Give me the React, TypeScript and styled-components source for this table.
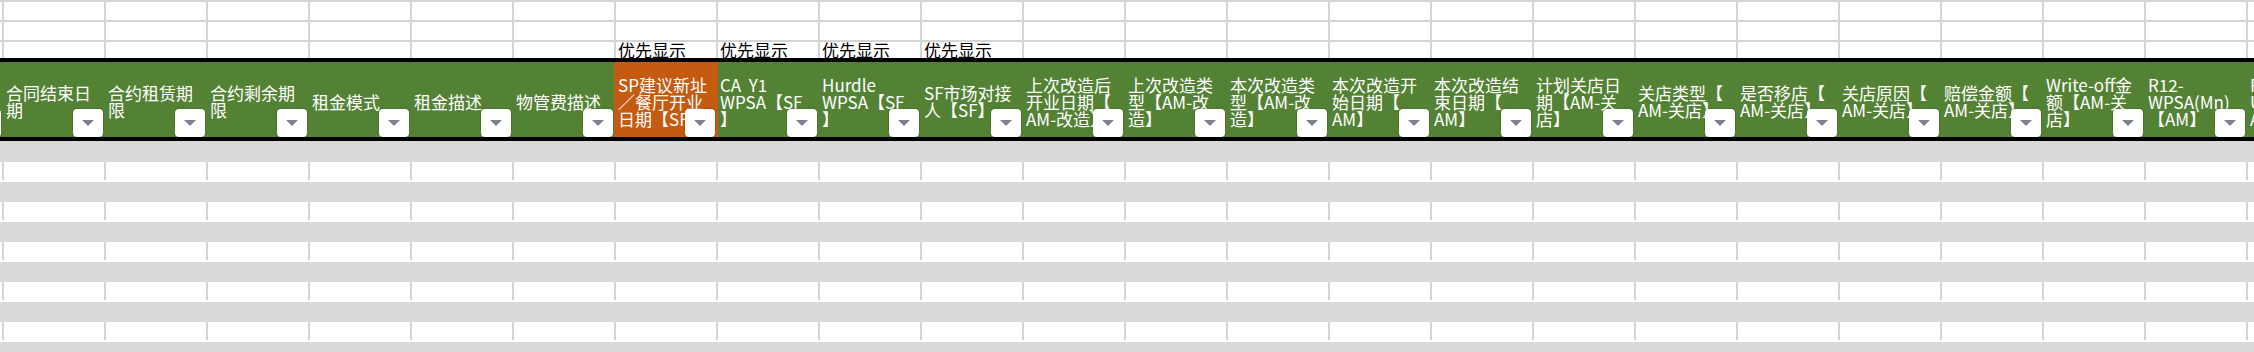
import styled, { createGlobalStyle } from 'styled-components'

const GRID = '#d4d4d4'
const BAND = '#d9d9d9'
const GREEN = '#548235'
const ORANGE = '#c55a11'

const GlobalStyle = createGlobalStyle`
  html,
  body {
    margin: 0;
    padding: 0;
    background: #fff;
    overflow: hidden;
  }
  body {
    font-family: "Noto Sans CJK SC", "Liberation Sans", sans-serif;
  }
`

interface Column {
  lines: string[]
  orange?: boolean
  priority?: boolean
}

// first entry is the column that sits just off the left edge
const columns: Column[] = [
  { lines: ['合同开始日', '期'] },
  { lines: ['合同结束日', '期'] },
  { lines: ['合约租赁期', '限'] },
  { lines: ['合约剩余期', '限'] },
  { lines: ['租金模式'] },
  { lines: ['租金描述'] },
  { lines: ['物管费描述'] },
  { lines: ['SP建议新址', '／餐厅开业', '日期【SF】'], orange: true, priority: true },
  { lines: ['CA  Y1', 'WPSA【SF', '】'], priority: true },
  { lines: ['Hurdle', 'WPSA【SF', '】'], priority: true },
  { lines: ['SF市场对接', '人【SF】'], priority: true },
  { lines: ['上次改造后', '开业日期【', 'AM-改造】'] },
  { lines: ['上次改造类', '型【AM-改', '造】'] },
  { lines: ['本次改造类', '型【AM-改', '造】'] },
  { lines: ['本次改造开', '始日期【', 'AM】'] },
  { lines: ['本次改造结', '束日期【', 'AM】'] },
  { lines: ['计划关店日', '期【AM-关', '店】'] },
  { lines: ['关店类型【', 'AM-关店】'] },
  { lines: ['是否移店【', 'AM-关店】'] },
  { lines: ['关店原因【', 'AM-关店】'] },
  { lines: ['赔偿金额【', 'AM-关店】'] },
  { lines: ['Write-off金', '额【AM-关', '店】'] },
  { lines: ['R12-', 'WPSA(Mn)', '【AM】'] },
  { lines: ['R12-', 'UPSA【', 'AM】'] },
]

const Sheet = styled.div`
  width: 2254px;
  height: 352px;
  overflow: hidden;
`

const GridRow = styled.div<{ $height: number }>`
  display: flex;
  margin-left: -100px;
  width: max-content;
  height: ${(p) => p.$height}px;
  box-sizing: border-box;
  border-top: 2px solid ${GRID};
`

const GridCell = styled.div`
  flex: 0 0 102px;
  box-sizing: border-box;
  border-left: 2px solid ${GRID};
  padding-left: 2px;
  display: flex;
  align-items: flex-end;
  font-size: 17px;
  line-height: 16px;
  color: #000;
  white-space: nowrap;
`

const HeaderRow = styled.div`
  display: flex;
  margin-left: -100px;
  width: max-content;
  height: 83px;
  box-sizing: border-box;
  border-top: 4px solid #000;
  border-bottom: 4px solid #000;
  background: ${GREEN};
`

const HeaderCell = styled.div<{ $orange?: boolean }>`
  flex: 0 0 102px;
  position: relative;
  box-sizing: border-box;
  padding: 3px 0 0 4px;
  display: flex;
  align-items: center;
  overflow: hidden;
  color: #fff;
  font-size: 17px;
  line-height: 17px;
  background: ${(p) => (p.$orange ? ORANGE : 'transparent')};
  box-shadow: ${(p) => (p.$orange ? `2px 0 0 ${ORANGE}` : 'none')};
`

const Label = styled.div`
  display: flex;
  flex-direction: column;
`

const Line = styled.span`
  white-space: pre;
`

const FilterButton = styled.div`
  position: absolute;
  right: 1px;
  bottom: 0;
  width: 30px;
  height: 28px;
  box-sizing: border-box;
  background: #fff;
  border-radius: 4px;
  box-shadow: 0 0 2px rgba(0, 0, 0, 0.35);
  display: flex;
  align-items: center;
  justify-content: center;
`

const Band = styled.div<{ $height: number }>`
  height: ${(p) => p.$height}px;
  background: ${BAND};
`

const BlankRow = styled.div`
  display: flex;
  margin-left: -100px;
  width: max-content;
  height: 20px;
`

const BlankCell = styled.div`
  flex: 0 0 102px;
  height: 18px;
  box-sizing: border-box;
  border-left: 2px solid ${GRID};
`

function Arrow() {
  return (
    <svg width="12" height="6" viewBox="0 0 12 6">
      <polygon points="0,0 12,0 6,6" fill="#7d8191" />
    </svg>
  )
}

export default function App() {
  return (
    <>
      <GlobalStyle />
      <Sheet>
        <GridRow $height={20}>
          {columns.map((_, i) => (
            <GridCell key={i} />
          ))}
        </GridRow>
        <GridRow $height={20}>
          {columns.map((_, i) => (
            <GridCell key={i} />
          ))}
        </GridRow>
        <GridRow $height={18}>
          {columns.map((col, i) => (
            <GridCell key={i}>{col.priority ? '优先显示' : ''}</GridCell>
          ))}
        </GridRow>

        <HeaderRow>
          {columns.map((col, i) => (
            <HeaderCell key={i} $orange={col.orange}>
              <Label>
                {col.lines.map((line, j) => (
                  <Line key={j}>{line}</Line>
                ))}
              </Label>
              <FilterButton>
                <Arrow />
              </FilterButton>
            </HeaderCell>
          ))}
        </HeaderRow>

        <Band $height={21} />
        {[0, 1, 2, 3, 4].map((r) => (
          <div key={r}>
            <BlankRow>
              {columns.map((_, i) => (
                <BlankCell key={i} />
              ))}
            </BlankRow>
            <Band $height={20} />
          </div>
        ))}
      </Sheet>
    </>
  )
}
